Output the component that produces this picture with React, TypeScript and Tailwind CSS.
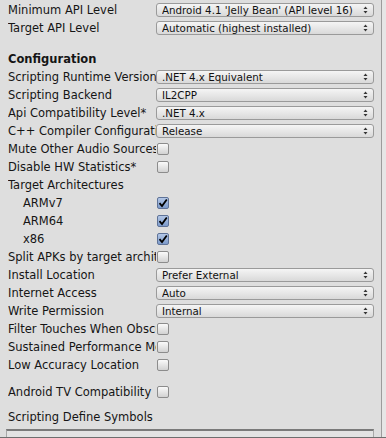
import React from "react";

const font = { fontFamily: '"DejaVu Sans", "Liberation Sans", sans-serif' };

function Arrows() {
  return (
    <svg width="5" height="8" viewBox="0 0 5 8" className="shrink-0">
      <path d="M2.5 0.5 L4.5 3 L0.5 3 Z" fill="#333" />
      <path d="M2.5 7.5 L4.5 5 L0.5 5 Z" fill="#333" />
    </svg>
  );
}

function Dropdown({ value }: { value: string }) {
  return (
    <div className="w-[218px] h-[14px] shrink-0 rounded-[3px] border border-[#9a9a9a] bg-gradient-to-b from-[#f5f5f5] to-[#d9d9d9] flex items-center pl-[5px] pr-[5px]">
      <span className="flex-1 truncate text-[10.3px] leading-[12px] text-[#111]">{value}</span>
      <Arrows />
    </div>
  );
}

function Checkbox({ checked }: { checked?: boolean }) {
  return (
    <div
      className={
        "ml-[1px] w-[12px] h-[12px] shrink-0 rounded-[2px] border flex items-center justify-center " +
        (checked
          ? "border-[#5f7398] bg-gradient-to-b from-[#b3c7e6] to-[#7d9bcb]"
          : "border-[#8c8c8c] bg-gradient-to-b from-[#fafafa] to-[#d2d2d2]")
      }
    >
      {checked && (
        <svg width="10" height="10" viewBox="0 0 10 10">
          <path d="M1.5 5.2 L4 8 L8.8 1.5" stroke="#000" strokeWidth="1.8" fill="none" strokeLinejoin="miter" />
        </svg>
      )}
    </div>
  );
}

function Row({
  label,
  indent,
  children,
}: {
  label: string;
  indent?: boolean;
  children?: React.ReactNode;
}) {
  return (
    <div className="h-[18px] shrink-0 flex items-center">
      <div
        className={
          "w-[148px] shrink-0 overflow-hidden whitespace-nowrap text-[11.5px] leading-[15px] text-[#151515] " +
          (indent ? "pl-[15px]" : "")
        }
      >
        {label}
      </div>
      {children}
    </div>
  );
}

export default function App() {
  return (
    <div
      className="w-[386px] h-[438px] bg-[#dedede] overflow-hidden flex border-b border-[#6e6e6e]"
      style={font}
    >
      <div className="w-[381px] shrink-0 flex flex-col pl-[8px] pt-[1px]">
        <Row label="Minimum API Level">
          <Dropdown value="Android 4.1 'Jelly Bean' (API level 16)" />
        </Row>
        <Row label="Target API Level">
          <Dropdown value="Automatic (highest installed)" />
        </Row>
        <div className="h-[13px] shrink-0" />
        <div className="h-[18px] shrink-0 flex items-center text-[11.5px] font-bold text-[#151515] leading-[15px]">
          Configuration
        </div>
        <Row label="Scripting Runtime Version">
          <Dropdown value=".NET 4.x Equivalent" />
        </Row>
        <Row label="Scripting Backend">
          <Dropdown value="IL2CPP" />
        </Row>
        <Row label="Api Compatibility Level*">
          <Dropdown value=".NET 4.x" />
        </Row>
        <Row label="C++ Compiler Configuration">
          <Dropdown value="Release" />
        </Row>
        <Row label="Mute Other Audio Sources">
          <Checkbox />
        </Row>
        <Row label="Disable HW Statistics*">
          <Checkbox />
        </Row>
        <Row label="Target Architectures" />
        <Row label="ARMv7" indent>
          <Checkbox checked />
        </Row>
        <Row label="ARM64" indent>
          <Checkbox checked />
        </Row>
        <Row label="x86" indent>
          <Checkbox checked />
        </Row>
        <Row label="Split APKs by target architecture">
          <Checkbox />
        </Row>
        <Row label="Install Location">
          <Dropdown value="Prefer External" />
        </Row>
        <Row label="Internet Access">
          <Dropdown value="Auto" />
        </Row>
        <Row label="Write Permission">
          <Dropdown value="Internal" />
        </Row>
        <Row label="Filter Touches When Obscured">
          <Checkbox />
        </Row>
        <Row label="Sustained Performance Mode">
          <Checkbox />
        </Row>
        <Row label="Low Accuracy Location">
          <Checkbox />
        </Row>
        <div className="h-[9px] shrink-0" />
        <Row label="Android TV Compatibility">
          <Checkbox />
        </Row>
        <div className="h-[7px] shrink-0" />
        <Row label="Scripting Define Symbols" />
        <div className="h-[3px] shrink-0" />
        <div className="ml-[-2px] w-[368px] h-[20px] shrink-0 border-t-2 border-l border-r border-t-[#7a7a7a] border-l-[#a8a8a8] border-r-[#a8a8a8] bg-[#e3e3e3]" />
      </div>
      <div className="w-[1px] shrink-0 bg-[#9c9c9c]" />
      <div className="flex-1 bg-[#e6e6e6]" />
    </div>
  );
}
